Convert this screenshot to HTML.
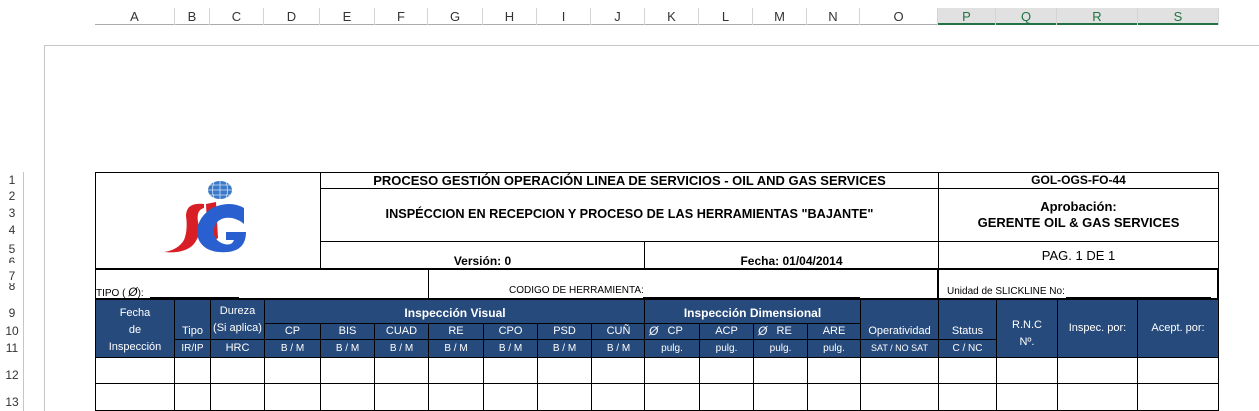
<!DOCTYPE html>
<html><head><meta charset="utf-8"><style>
body{margin:0;width:1259px;height:411px;background:#fff;position:relative;overflow:hidden;font-family:"Liberation Sans",Arial,sans-serif;}
.a{position:absolute;box-sizing:border-box;}
.c{position:absolute;box-sizing:border-box;border:1px solid #000;display:flex;align-items:center;justify-content:center;text-align:center;font-size:12px;line-height:1.2;}
.h{background:#264a7b;color:#fff;font-size:11px;}
.s{font-size:10px;}
.b{font-weight:bold;}
.hl{position:absolute;top:8px;height:17px;font-size:13px;color:#333;display:flex;align-items:center;justify-content:center;border-right:1px solid #d4d4d4;box-sizing:border-box;}
.rn{position:absolute;left:0;width:24px;font-size:12px;color:#333;text-align:center;}
</style></head><body>
<div class="a" style="left:95px;top:24px;width:1124px;height:1px;background:#ababab"></div>
<div class="a" style="left:938px;top:8px;width:281px;height:16px;background:#e1e1e1"></div>
<div class="a" style="left:938px;top:23px;width:281px;height:2px;background:#217346"></div>
<div class="hl" style="left:95px;width:80px">A</div>
<div class="hl" style="left:175px;width:35px">B</div>
<div class="hl" style="left:210px;width:54px">C</div>
<div class="hl" style="left:264px;width:56px">D</div>
<div class="hl" style="left:320px;width:55px">E</div>
<div class="hl" style="left:375px;width:53px">F</div>
<div class="hl" style="left:428px;width:55px">G</div>
<div class="hl" style="left:483px;width:54px">H</div>
<div class="hl" style="left:537px;width:54px">I</div>
<div class="hl" style="left:591px;width:54px">J</div>
<div class="hl" style="left:645px;width:54px">K</div>
<div class="hl" style="left:699px;width:54px">L</div>
<div class="hl" style="left:753px;width:54px">M</div>
<div class="hl" style="left:807px;width:53px">N</div>
<div class="hl" style="left:860px;width:78px">O</div>
<div class="hl" style="left:938px;width:58px;color:#217346">P</div>
<div class="hl" style="left:996px;width:61px;color:#217346">Q</div>
<div class="hl" style="left:1057px;width:81px;color:#217346">R</div>
<div class="hl" style="left:1138px;width:81px;color:#217346">S</div>
<div class="a" style="left:44px;top:45px;width:1215px;height:1px;background:#c6c6c6"></div>
<div class="a" style="left:44px;top:45px;width:1px;height:366px;background:#c6c6c6"></div>
<div class="a" style="left:23px;top:172px;width:1px;height:239px;background:#c6c6c6"></div>
<div class="rn" style="top:173px">1</div><div class="rn" style="top:189px">2</div><div class="rn" style="top:206px">3</div><div class="rn" style="top:223px">4</div><div class="rn" style="top:242px">5</div><div class="rn" style="top:255px;height:8px;overflow:hidden">6</div><div class="rn" style="top:269px">7</div><div class="rn" style="top:283px;height:11px;overflow:hidden;line-height:6px">8</div><div class="rn" style="top:306px">9</div><div class="rn" style="top:324px">10</div><div class="rn" style="top:341px">11</div><div class="rn" style="top:368px">12</div><div class="rn" style="top:395px">13</div>

<div class="c" style="left:95px;top:172px;width:226px;height:98px"></div>
<svg class="a" style="left:160px;top:178px" width="95" height="80" viewBox="0 0 95 80">
<ellipse cx="60" cy="12" rx="12" ry="9" fill="#3a78c8"/>
<g stroke="#cfe0f5" stroke-width="0.8" fill="none"><path d="M48 12h24M50 7h20M50 17h20M60 3v18M54 4q-3 8 0 16M66 4q3 8 0 16"/></g>
<path d="M44 26 Q26 24 26 38 Q28 52 24 62 Q18 72 4 74 Q22 76 32 68 Q42 58 38 44 Q36 32 44 30 Z" fill="#d81f26"/>
<path d="M46 26 L56 24 L58 60 L48 66 Z" fill="#d81f26"/>
<path d="M84 30 Q70 22 52 30 Q34 42 38 60 Q44 76 68 74 Q86 72 86 54 L66 54 L66 62 L74 62 Q72 68 64 66 Q52 62 54 50 Q58 38 72 40 Q80 42 84 46 Z" fill="#2a5fd0"/>
</svg>
<div class="c b" style="left:320px;top:172px;width:619px;height:17px;font-size:13px">PROCESO GESTIÓN OPERACIÓN LINEA DE SERVICIOS - OIL AND GAS SERVICES</div>
<div class="c b" style="left:320px;top:188px;width:619px;height:54px;font-size:12.7px">INSPÉCCION EN RECEPCION Y PROCESO DE LAS HERRAMIENTAS "BAJANTE"</div>
<div class="c b" style="left:320px;top:241px;width:325px;height:29px;align-items:flex-end;padding-bottom:1px">Versión: 0</div>
<div class="c b" style="left:644px;top:241px;width:295px;height:29px;align-items:flex-end;padding-bottom:1px">Fecha: 01/04/2014</div>
<div class="c b" style="left:938px;top:172px;width:281px;height:17px">GOL-OGS-FO-44</div>
<div class="c b" style="left:938px;top:188px;width:281px;height:54px;font-size:13px">Aprobación:<br>GERENTE OIL &amp; GAS SERVICES</div>
<div class="c" style="left:938px;top:241px;width:281px;height:29px;font-size:13px">PAG. 1 DE 1</div>
<div class="a" style="left:95px;top:268px;width:1124px;height:2px;background:#000"></div>
<div class="a" style="left:95px;top:269px;width:1px;height:31px;background:#000"></div>
<div class="a" style="left:428px;top:269px;width:1px;height:31px;background:#000"></div>
<div class="a" style="left:937px;top:269px;width:2px;height:31px;background:#000"></div>
<div class="a" style="left:1217px;top:269px;width:2px;height:31px;background:#000"></div>
<div class="a" style="left:96px;top:285px;font-size:10px">TIPO ( <span style="font-style:italic;font-size:12px">Ø</span>):</div>
<div class="a" style="left:150px;top:297px;width:89px;height:1px;background:#000"></div>
<div class="a" style="left:509px;top:285px;font-size:10px">CODIGO DE HERRAMIENTA:</div>
<div class="a" style="left:643px;top:297px;width:217px;height:1px;background:#000"></div>
<div class="a" style="left:947px;top:286px;font-size:10px">Unidad de SLICKLINE No:</div>
<div class="a" style="left:1066px;top:297px;width:145px;height:1px;background:#000"></div>
<div class="a" style="left:95px;top:298px;width:1124px;height:2px;background:#000"></div>

<div class="c h" style="left:95px;top:299px;width:80px;height:59px;line-height:17px;padding-top:4px">Fecha<br>de<br>Inspección</div>
<div class="c h" style="left:174px;top:299px;width:37px;height:41px;align-items:flex-end;padding-bottom:1px">Tipo</div>
<div class="c h" style="left:174px;top:339px;width:37px;height:19px;font-size:10px">IR/IP</div>
<div class="c h" style="left:210px;top:299px;width:55px;height:41px;line-height:17px">Dureza<br>(Si aplica)</div>
<div class="c h" style="left:210px;top:339px;width:55px;height:19px">HRC</div>
<div class="c h b" style="left:264px;top:299px;width:382px;height:25px;font-size:12px;padding-top:4px">Inspección Visual</div>
<div class="c h b" style="left:644px;top:299px;width:217px;height:25px;font-size:12px;padding-top:4px">Inspección Dimensional</div>
<div class="c h" style="left:264px;top:323px;width:57px;height:17px">CP</div>
<div class="c h" style="left:320px;top:323px;width:55px;height:17px">BIS</div>
<div class="c h" style="left:374px;top:323px;width:55px;height:17px">CUAD</div>
<div class="c h" style="left:428px;top:323px;width:56px;height:17px">RE</div>
<div class="c h" style="left:483px;top:323px;width:55px;height:17px">CPO</div>
<div class="c h" style="left:537px;top:323px;width:55px;height:17px">PSD</div>
<div class="c h" style="left:591px;top:323px;width:55px;height:17px">CUÑ</div>
<div class="c h" style="left:644px;top:323px;width:56px;height:17px;justify-content:flex-start;padding-left:4px"><i style="font-size:12px">Ø</i>&nbsp;&nbsp;&nbsp;CP</div>
<div class="c h" style="left:699px;top:323px;width:55px;height:17px">ACP</div>
<div class="c h" style="left:753px;top:323px;width:55px;height:17px;justify-content:flex-start;padding-left:4px"><i style="font-size:12px">Ø</i>&nbsp;&nbsp;&nbsp;RE</div>
<div class="c h" style="left:807px;top:323px;width:54px;height:17px">ARE</div>
<div class="c h s" style="left:264px;top:339px;width:57px;height:19px">B / M</div>
<div class="c h s" style="left:320px;top:339px;width:55px;height:19px">B / M</div>
<div class="c h s" style="left:374px;top:339px;width:55px;height:19px">B / M</div>
<div class="c h s" style="left:428px;top:339px;width:56px;height:19px">B / M</div>
<div class="c h s" style="left:483px;top:339px;width:55px;height:19px">B / M</div>
<div class="c h s" style="left:537px;top:339px;width:55px;height:19px">B / M</div>
<div class="c h s" style="left:591px;top:339px;width:55px;height:19px">B / M</div>
<div class="c h s" style="left:644px;top:339px;width:56px;height:19px">pulg.</div>
<div class="c h s" style="left:699px;top:339px;width:55px;height:19px">pulg.</div>
<div class="c h s" style="left:753px;top:339px;width:55px;height:19px">pulg.</div>
<div class="c h s" style="left:807px;top:339px;width:54px;height:19px">pulg.</div>
<div class="c h" style="left:860px;top:299px;width:79px;height:41px;align-items:flex-end;padding-bottom:1px">Operatividad</div>
<div class="c h" style="left:860px;top:339px;width:79px;height:19px;font-size:9px">SAT / NO SAT</div>
<div class="c h" style="left:938px;top:299px;width:59px;height:41px;align-items:flex-end;padding-bottom:1px">Status</div>
<div class="c h" style="left:938px;top:339px;width:59px;height:19px;font-size:10px">C / NC</div>
<div class="c h" style="left:996px;top:299px;width:62px;height:59px;line-height:17px;padding-top:10px">R.N.C<br>Nº.</div>
<div class="c h" style="left:1057px;top:299px;width:81px;height:59px">Inspec. por:</div>
<div class="c h" style="left:1137px;top:299px;width:82px;height:59px">Acept. por:</div>

<div id="rows"></div>
<script>
var xs=[95,174,210,264,320,374,428,483,537,591,644,699,753,807,860,938,996,1057,1137,1218];
var ys=[[357,27],[383,28]];var h='';
ys.forEach(function(r){for(var i=0;i<xs.length-1;i++){h+='<div class="c" style="left:'+xs[i]+'px;top:'+r[0]+'px;width:'+(xs[i+1]-xs[i]+1)+'px;height:'+r[1]+'px"></div>';}});
document.getElementById('rows').innerHTML=h;
</script>
</body></html>
